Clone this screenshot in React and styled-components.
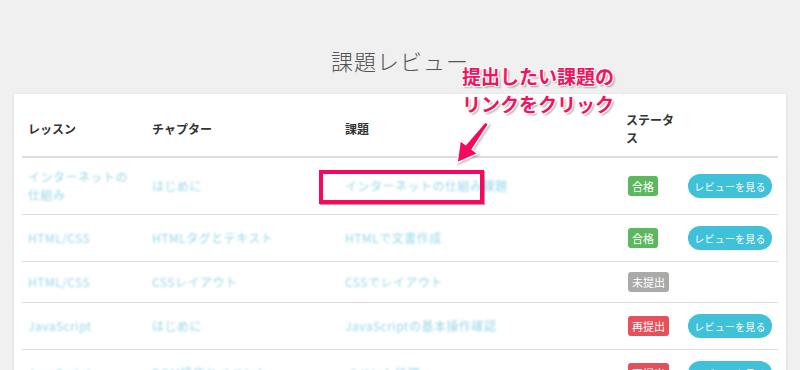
import React from 'react'
import styled, { createGlobalStyle } from 'styled-components'

const GlobalStyle = createGlobalStyle`
  html, body {
    margin: 0;
    padding: 0;
    background: #f0f0f0;
  }
  body {
    font-family: "Noto Sans CJK JP", "Liberation Sans", sans-serif;
    color: #333;
  }
`

const Page = styled.div`
  position: relative;
  width: 800px;
  padding-top: 45px;
  padding-bottom: 20px;
`
const Title = styled.h1`
  margin: 0 0 19px;
  text-align: center;
  font-size: 22px;
  line-height: 30px;
  font-weight: 300;
  letter-spacing: 1px;
  color: #555;
`
const Card = styled.div`
  margin: 0 14px;
  padding: 8px 8px 0;
  background: #fff;
  box-shadow: 0 1px 3px rgba(0, 0, 0, 0.12);
`
const Table = styled.table`
  width: 100%;
  border-collapse: collapse;
  table-layout: fixed;
  font-size: 12px;
  line-height: 18px;
`
const Th = styled.th`
  box-sizing: border-box;
  width: ${(p) => (p.$w ? `${p.$w}px` : 'auto')};
  padding: 9px 6px;
  text-align: left;
  vertical-align: middle;
  font-weight: 700;
  color: #333;
  border-bottom: 2px solid #ddd;
`
const Td = styled.td`
  padding: 10px 6px;
  vertical-align: middle;
  border-bottom: 1px solid #ddd;
`
const BlurLink = styled.a`
  color: #31b0d5;
  opacity: 0.5;
  filter: blur(0.9px);
  text-decoration: none;
  letter-spacing: 0.5px;
`
const Badge = styled.span`
  display: inline-block;
  margin-left: 2px;
  padding: 0 4px;
  height: 20px;
  line-height: 20px;
  border-radius: 3px;
  font-size: 11px;
  color: #fff;
  background: ${(p) => p.$bg};
`
const ReviewButton = styled.button`
  display: block;
  margin: 1px 0;
  width: 84px;
  height: 24px;
  padding: 0;
  border: none;
  border-radius: 12px;
  background: #3ec1d9;
  color: #fff;
  font-family: inherit;
  font-size: 10px;
  letter-spacing: 0.2px;
  cursor: pointer;
`
const Highlight = styled.div`
  position: absolute;
  left: 319px;
  top: 170px;
  width: 157px;
  height: 26px;
  border: 4px solid #f7085e;
  box-shadow: 1px 1px 1px rgba(0, 0, 0, 0.35);
`
const Note = styled.div`
  position: absolute;
  left: 462px;
  top: 62px;
  font-size: 19px;
  line-height: 28px;
  font-weight: 700;
  color: #f2125e;
  text-shadow: -1px -1px 0 #fff, 1px -1px 0 #fff, -1px 1px 0 #fff,
    1px 1px 0 #fff, 2px 2px 2px rgba(0, 0, 0, 0.35);
`
const Arrow = styled.svg`
  position: absolute;
  left: 440px;
  top: 115px;
  overflow: visible;
  filter: drop-shadow(1px 1px 1px rgba(0, 0, 0, 0.3));
`

const statusColors = {
  合格: '#5cb85c',
  未提出: '#aaaaaa',
  再提出: '#e5505b',
}

const rows = [
  { lesson: 'インターネットの仕組み', chapter: 'はじめに', task: 'インターネットの仕組み課題', status: '合格', review: true },
  { lesson: 'HTML/CSS', chapter: 'HTMLタグとテキスト', task: 'HTMLで文書作成', status: '合格', review: true },
  { lesson: 'HTML/CSS', chapter: 'CSSレイアウト', task: 'CSSでレイアウト', status: '未提出', review: false },
  { lesson: 'JavaScript', chapter: 'はじめに', task: 'JavaScriptの基本操作確認', status: '再提出', review: true },
  { lesson: 'JavaScript', chapter: 'DOM操作とイベント', task: 'イベント処理', status: '再提出', review: true },
]

function App() {
  return (
    <>
      <GlobalStyle />
      <Page>
        <Title>課題レビュー</Title>
        <Card>
          <Table>
            <thead>
              <tr>
                <Th $w={124}>レッスン</Th>
                <Th $w={193}>チャプター</Th>
                <Th $w={281}>課題</Th>
                <Th $w={62}>ステータス</Th>
                <Th></Th>
              </tr>
            </thead>
            <tbody>
              {rows.map((row, index) => (
                <tr key={index}>
                  <Td>
                    <BlurLink href="#">{row.lesson}</BlurLink>
                  </Td>
                  <Td>
                    <BlurLink href="#">{row.chapter}</BlurLink>
                  </Td>
                  <Td>
                    <BlurLink href="#">{row.task}</BlurLink>
                  </Td>
                  <Td>
                    <Badge $bg={statusColors[row.status]}>{row.status}</Badge>
                  </Td>
                  <Td>{row.review && <ReviewButton>レビューを見る</ReviewButton>}</Td>
                </tr>
              ))}
            </tbody>
          </Table>
        </Card>

        <Note>
          提出したい課題の
          <br />
          リンクをクリック
        </Note>
        <Arrow width="60" height="60" viewBox="0 0 60 60">
          <polygon
            points="17,48 37.8,38.6 32.2,34.4 48.6,9.2 45.4,6.8 25.8,29.6 20.2,25.4"
            fill="#f7085e"
            stroke="#fff"
            strokeWidth="1.5"
            strokeLinejoin="round"
          />
        </Arrow>
        <Highlight />
      </Page>
    </>
  )
}

export default App
